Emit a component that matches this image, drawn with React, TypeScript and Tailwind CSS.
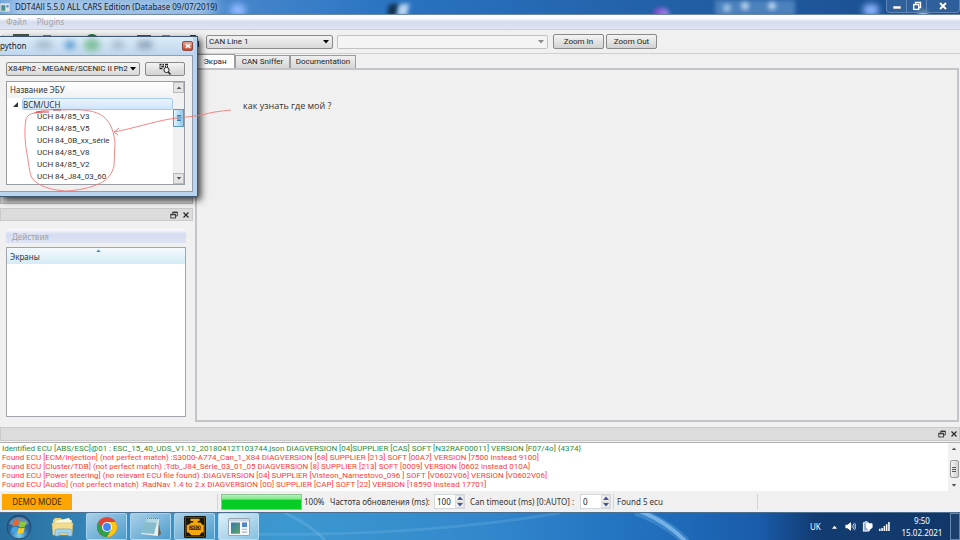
import React, { useState } from 'react';
import clsx from 'clsx';

const ecuList = [
  'UCH 84/85_V3',
  'UCH 84/85_V5',
  'UCH 84_0B_xx_série',
  'UCH 84/85_V8',
  'UCH 84/85_V2',
  'UCH 84_J84_03_60',
];

const logLines = [
  { ok: true, text: 'Identified ECU [ABS/ESC]@01 : ESC_15_40_UDS_V1.12_20180412T103744.json DIAGVERSION [04]SUPPLIER [CAS] SOFT [N32RAF00011] VERSION [F07/4o] {4374}' },
  { ok: false, text: 'Found ECU [ECM/Injection] (not perfect match) :S3000-A774_Can_1_X84 DIAGVERSION [68] SUPPLIER [213] SOFT [00A7] VERSION [7500 instead 9100]' },
  { ok: false, text: 'Found ECU [Cluster/TDB] (not perfect match) :Tdb_J84_Série_03_01_05 DIAGVERSION [8] SUPPLIER [213] SOFT [0009] VERSION [0602 instead 010A]' },
  { ok: false, text: 'Found ECU [Power steering] (no relevant ECU file found) :DIAGVERSION [04] SUPPLIER [Visteon_Namestovo_096 ] SOFT [V0602V06] VERSION [V0602V06]' },
  { ok: false, text: 'Found ECU [Audio] (not perfect match) :RadNav 1.4 to 2.x DIAGVERSION [0D] SUPPLIER [CAP] SOFT [22] VERSION [18590 instead 17701]' },
];

const tabs = ['Экран', 'CAN Sniffer', 'Documentation'];

const controlFont = "font-['Roboto','Noto_Sans',sans-serif]";

function Arrow({ up, className }: { up?: boolean; className?: string }) {
  return (
    <svg viewBox="0 0 6 4" className={clsx('h-1 w-1.5', className)} fill="currentColor" aria-hidden="true">
      <path d={up ? 'M0 4 3 0.5 6 4z' : 'M0 0 3 3.5 6 0z'} />
    </svg>
  );
}

function WindowControls() {
  return (
    <div className="flex h-[13px] shrink-0 self-start rounded-b border border-t-0 border-[#5f86b4] bg-[#3c6ca4]/60">
      <button aria-label="Minimize" className="flex w-5 items-center justify-center border-r border-[#5f86b4]">
        <svg viewBox="0 0 10 10" className="size-2.5" aria-hidden="true">
          <rect x="1" y="5" width="8" height="3" fill="#fff" stroke="#555f70" strokeWidth=".6" />
        </svg>
      </button>
      <button aria-label="Restore" className="flex w-5 items-center justify-center border-r border-[#5f86b4]">
        <svg viewBox="0 0 10 10" className="size-2.5" fill="none" stroke="#fff" strokeWidth="1.4" aria-hidden="true">
          <path d="M3.5 3V1.5h5v5H7" />
          <rect x="1.7" y="3.6" width="5" height="4.8" />
        </svg>
      </button>
      <button aria-label="Close" className="flex w-8 items-center justify-center">
        <svg viewBox="0 0 10 10" className="size-2.5" fill="none" aria-hidden="true">
          <path d="M2 2l6 6M8 2L2 8" stroke="#4a5568" strokeWidth="3" />
          <path d="M2 2l6 6M8 2L2 8" stroke="#fff" strokeWidth="1.9" />
        </svg>
      </button>
    </div>
  );
}

function TitleBar() {
  return (
    <header className="relative flex h-[15px] shrink-0 items-center overflow-hidden border-b border-[#6d87a8] bg-linear-to-r from-[#6ea3da] via-[#2a74c2] via-40% to-[#1a4c8c]">
      <div className="absolute inset-0" aria-hidden="true">
        <div className="absolute -top-1 left-2 h-6 w-52 rounded-full bg-white/50 blur-sm" />
        <div className="absolute top-1 left-[230px] h-3 w-4 rounded-full bg-[#8fb8ff] blur-[3px]" />
        <div className="absolute top-1 left-[388px] h-3 w-2.5 -skew-x-12 bg-[#12304f] blur-[2px]" />
        <div className="absolute top-1 left-[398px] h-3 w-2.5 -skew-x-12 bg-[#b8d4ee] blur-[2px]" />
        <div className="absolute top-2 left-[653px] h-3 w-4 rounded-full bg-linear-to-r from-[#7c3fc0] to-[#a88cf4] blur-[2px]" />
        <div className="absolute top-0 left-[715px] h-4 w-20 bg-[#4d82bd] blur-[2px]" />
        <div className="absolute top-1 left-[723px] size-2 rounded-full bg-[#9cc0e4] blur-[2px]" />
        <div className="absolute top-0.5 left-[741px] size-2 rounded-full bg-[#b4d0ec] blur-[2px]" />
        <div className="absolute top-0.5 left-[768px] size-2 rounded-full bg-[#b4d0ec] blur-[2px]" />
        <div className="absolute top-1 left-[863px] h-3 w-4 rounded-full bg-[#8ab4ff] blur-[3px]" />
        <div className="absolute top-2.5 left-[918px] h-2 w-2.5 rounded-full bg-[#c8d478] blur-[2px]" />
      </div>
      <div className="relative flex h-full min-w-0 grow items-center gap-[5px]">
        <AppIcon className="h-[9px] w-2.5" />
        <h1 className="truncate text-[8px] leading-3 text-[#17202c]">
          DDT4All 5.5.0 ALL CARS Edition (Database 09/07/2019)
        </h1>
      </div>
      <div className="relative flex h-full">
        <WindowControls />
      </div>
    </header>
  );
}

function AppIcon({ className }: { className?: string }) {
  return (
    <svg viewBox="0 0 22 16" className={className} preserveAspectRatio="none" aria-hidden="true">
      <rect x=".5" y=".5" width="21" height="15" rx="1" fill="#f4f6f8" stroke="#98a6b4" />
      <rect x="1" y="1" width="20" height="2" fill="#cfd8e2" />
      <rect x="3" y="4" width="9" height="10" fill="url(#appScreen)" />
      <rect x="14" y="4" width="5" height="4" fill="#4f86c6" />
      <path d="M14 10h5M14 12.500h5" stroke="#aab4c0" />
      <defs>
        <linearGradient id="appScreen" x1="0" y1="0" x2="1" y2="1">
          <stop offset="0" stopColor="#3c78b4" />
          <stop offset="1" stopColor="#58a860" />
        </linearGradient>
      </defs>
    </svg>
  );
}

function Toolbar() {
  return (
    <div className={clsx('flex h-6 shrink-0 items-center border-b border-[#cfcfcf] bg-[#f0f0f0]', controlFont)}>
      <svg viewBox="0 0 206 24" className="h-6 w-[206px] shrink-0" aria-hidden="true">
        <path d="M3 5v14" stroke="#999" />
        <rect x="13" y="4" width="16" height="14" fill="#4c5a50" />
        <path d="M43 5h8v12h-8z" fill="#777" />
        <circle cx="70" cy="13" r="6" fill="#3c84c4" />
        <circle cx="92" cy="11" r="7" fill="#1f7a34" />
        <path d="M112 6h12l-6 12z" fill="#888" />
        <rect x="137" y="5" width="14" height="13" fill="#555" />
        <path d="M162 5h8v12h-8z" fill="#888" />
        <path d="M190 5h6v6h3v6h-9z" fill="#233a70" />
      </svg>
      <div className="relative mr-1 w-[127px]">
        <select
          aria-label="CAN line"
          className="block h-3.5 w-full appearance-none rounded-xs border border-[#8a8a8a] bg-linear-to-b from-[#f3f3f3] to-[#d9d9d9] px-0.5 text-[8px] leading-3 text-[#222]"
        >
          <option>CAN Line 1</option>
        </select>
        <Arrow className="pointer-events-none absolute top-[5px] right-1 text-black" />
      </div>
      <div className="relative mr-[5px] w-[211px]">
        <select
          aria-label="Command"
          disabled
          className="block h-3.5 w-full appearance-none rounded-xs border border-[#c3c3c3] bg-[#f4f4f4] px-0.5 text-[8px] leading-3 opacity-100"
        />
        <Arrow className="pointer-events-none absolute top-[5px] right-1 text-[#8c8c8c]" />
      </div>
      <div className="flex gap-0.5">
        {['Zoom In', 'Zoom Out'].map((label) => (
          <button
            key={label}
            className="h-[15px] w-[51px] rounded-xs border border-[#8a8a8a] bg-linear-to-b from-[#f4f4f4] to-[#d2d2d2] text-[8px] leading-3 text-[#222]"
          >
            {label}
          </button>
        ))}
      </div>
    </div>
  );
}

function DockButtons() {
  return (
    <div className="flex items-center gap-1">
      <button aria-label="Float">
        <svg viewBox="0 0 8 8" className="size-2" fill="none" stroke="#222" strokeWidth=".8" aria-hidden="true">
          <path d="M2.800 3V1h4.500v4H5.500M2.800 1.500h4.500" />
          <rect x=".8" y="3.200" width="4.600" height="3.800" />
          <path d="M.8 3.800h4.600" />
        </svg>
      </button>
      <button aria-label="Close dock">
        <svg viewBox="0 0 8 8" className="size-2" fill="none" stroke="#222" strokeWidth="1.100" aria-hidden="true">
          <path d="M1.500 1.500l5 5M6.500 1.500l-5 5" />
        </svg>
      </button>
    </div>
  );
}

function ScreensDock() {
  return (
    <aside className="flex w-[193px] shrink-0 flex-col pt-[142px]">
      <div className="mb-1 h-2 border border-[#b4b4b4] bg-[#cfcfcf]" />
      <div className="flex h-[13px] items-center justify-end border border-[#cacaca] bg-[#dcdcdc] pr-0.5">
        <DockButtons />
      </div>
      <div className="flex grow flex-col pt-2 pr-[7px] pb-2.5 pl-1.5">
        <div className="mb-1 h-3.5 bg-linear-to-b from-[#fbfcfe] via-[#d6dcf0] via-40% to-[#dfe4f4] pl-1.5 text-[8px] leading-4 text-[#a2a2a2]">
          Действия
        </div>
        <section className="grow border border-[#a2a6ac] bg-white">
          <h2 className="relative h-4 bg-linear-to-b from-[#f4fafd] to-[#d4ebf6] pl-[3px] text-[8px] leading-[18px] text-[#333]">
            Экраны
            <Arrow up className="absolute top-px left-1/2 h-[3px] w-[5px] text-[#4f8fae]" />
          </h2>
        </section>
      </div>
    </aside>
  );
}

function TabArea() {
  const [active, setActive] = useState(tabs[0]);
  return (
    <main className="flex min-w-0 grow flex-col pr-px pb-[5px] pl-0.5">
      <div role="tablist" className={clsx('flex h-3.5 items-end', controlFont)}>
        {tabs.map((tab) => (
          <button
            key={tab}
            role="tab"
            aria-selected={active === tab}
            onClick={() => setActive(tab)}
            className={clsx(
              'border border-b-0 border-[#9c9c9c] text-center text-[8px] leading-3 text-[#222]',
              tab === 'Экран' && 'w-10',
              tab === 'CAN Sniffer' && 'w-[55px]',
              tab === 'Documentation' && 'w-[66px]',
              active === tab ? 'h-3.5 bg-white' : 'h-[13px] bg-linear-to-b from-[#f0f0f0] to-[#d6d6d6]',
            )}
          >
            {tab}
          </button>
        ))}
      </div>
      <div role="tabpanel" className="grow border-2 border-[#c4c4c8] bg-[#f0f0f0] pt-7 pl-[46px]">
        <p className="font-['Open_Sans','Noto_Sans',sans-serif] text-[9px] leading-4 text-[#333]">как узнать где мой ?</p>
      </div>
    </main>
  );
}

function PythonDialog() {
  return (
    <div
      role="dialog"
      aria-label="python"
      className="absolute top-9 left-0 flex h-[161px] w-[198px] flex-col border border-l-0 border-[#3f5870] bg-[#b9d4ee] pr-1 pb-1 shadow-[3px_3px_7px_rgba(0,0,0,0.75)]"
    >
      <div className="relative flex h-[18px] shrink-0 items-center justify-between overflow-hidden bg-linear-to-b from-[#dcebf8] to-[#bed7ee]">
        <div className="absolute inset-0" aria-hidden="true">
          <div className="absolute top-1 left-9 h-2 w-4 rounded-full bg-[#a4bacd] blur-[3px]" />
          <div className="absolute top-1 left-[65px] h-2 w-2.5 rounded-full bg-[#4e94cf] blur-[3px]" />
          <div className="absolute top-0.5 left-[84px] h-3 w-4 rounded-full bg-[#7fc09a] blur-[3px]" />
          <div className="absolute top-1 left-[112px] h-2 w-3 rounded-full bg-[#a4bacd] blur-[3px]" />
          <div className="absolute top-1 left-[137px] h-2 w-4 rounded-full bg-[#8ea4b8] blur-[3px]" />
        </div>
        <h2 className="relative text-[8px] leading-3 text-[#1c1c1c]">python</h2>
        <button
          aria-label="Close dialog"
          className="relative flex h-2.5 w-[11px] items-center justify-center rounded-xs border border-[#8c4a40] bg-linear-to-b from-[#e8a090] to-[#c8442c]"
        >
          <svg viewBox="0 0 8 8" className="size-1.5" stroke="#fff" strokeWidth="2" aria-hidden="true">
            <path d="M1 1.500l6 5M7 1.500l-6 5" />
          </svg>
        </button>
      </div>
      <div className="flex grow flex-col border border-l-0 border-[#8fa0b2] bg-[#f0f0f0] pt-1.5 pr-[7px] pb-1.5 pl-1.5">
        <div className="mb-[5px] flex gap-[5px]">
          <div className={clsx('relative w-[134px]', controlFont)}>
            <select
              aria-label="Vehicle"
              className="block h-3.5 w-full appearance-none rounded-xs border border-[#8a8a8a] bg-linear-to-b from-[#f3f3f3] to-[#d9d9d9] px-px text-[8px] leading-3 text-[#222]"
            >
              <option>X84Ph2 - MEGANE/SCENIC II Ph2</option>
            </select>
            <Arrow className="pointer-events-none absolute top-[5px] right-1 text-black" />
          </div>
          <button
            aria-label="Scan"
            className="flex h-3.5 grow items-center justify-center rounded-xs border border-[#8a8a8a] bg-linear-to-b from-[#f4f4f4] to-[#d2d2d2]"
          >
            <svg viewBox="0 0 12 12" className="size-3" fill="none" stroke="#222" aria-hidden="true">
              <path d="M0.500 1.500h2M3.500 1.500h1.500M6 1.500h3M0.500 3.500h1M2.500 3.500h2.500M6 3.500h1M8 3.500h1M0.500 5.500h3" strokeWidth="1.500" />
              <circle cx="7.500" cy="7" r="2.600" fill="#f4f4f4" />
              <path d="M9.300 9l2.200 2.500" strokeWidth="1.400" />
            </svg>
          </button>
        </div>
        <div className="flex grow border border-[#9a9ea4] bg-white text-[8px] text-[#333]">
          <div className="min-w-0 grow">
            <h3 className="h-4 bg-linear-to-b from-white to-[#f0f1f3] pl-[3px] leading-4">Название ЭБУ</h3>
            <div className="flex h-3 items-center">
              <svg viewBox="0 0 6 6" className="mr-1 ml-1.5 size-[5px]" fill="#333" aria-hidden="true">
                <path d="M6 0v6H0z" />
              </svg>
              <span className="h-3 grow rounded-xs border border-[#a8cdf0] bg-linear-to-b from-[#eaf4fd] to-[#cfe5fa] leading-[11px]">
                BCM/UCH
              </span>
            </div>
            <ul className={clsx('pt-px pl-[30px] leading-3', controlFont)}>
              {ecuList.map((ecu) => (
                <li key={ecu}>{ecu}</li>
              ))}
            </ul>
          </div>
          <div className="flex w-[11px] flex-col bg-[#f1f1f1]">
            <button aria-label="Scroll up" className="flex h-[11px] items-center justify-center border border-[#bbb] bg-[#e4e4e4] text-[#555]">
              <Arrow up className="h-[3px] w-1" />
            </button>
            <div className="mt-4 flex h-[18px] items-center justify-center border border-[#5a9bc4] bg-linear-to-r from-[#dff2fc] to-[#8fc8ec]">
              <span className="h-1.5 w-1 border-y border-[#3a7ca8] bg-[#6fb0d8]" />
            </div>
            <button aria-label="Scroll down" className="mt-auto flex h-[11px] items-center justify-center border border-[#bbb] bg-[#e4e4e4] text-[#555]">
              <Arrow className="h-[3px] w-1" />
            </button>
          </div>
        </div>
      </div>
    </div>
  );
}

// hand drawn marker around the UCH entries
function Markup() {
  return (
    <svg viewBox="0 0 240 200" className="pointer-events-none absolute top-0 left-0 h-[200px] w-60" fill="none" stroke="#f07878" strokeWidth=".9" aria-hidden="true">
      <path d="M34 113C42 110 54 109 64 110C80 109 96 110 104 117C112 124 114 134 115 143L114 166C112 174 108 178 104 181C96 186 84 190 66 191C50 190 38 186 32 178C29 172 29 164 27 154C25 143 24 130 26 119C28 114 33 112 42 113" />
      <path d="M231 110C222 111 212 112 206 114C195 117 180 117 170 119C152 122 135 128 114 132M119 128L114 132L118 135" />
      <path d="M36 112h13M53 110h8" stroke="#c81e28" />
    </svg>
  );
}

function LogPane() {
  return (
    <section className="shrink-0">
      <div className="mb-px flex h-3.5 items-center justify-end border border-[#cacaca] bg-[#dcdcdc] pr-px">
        <DockButtons />
      </div>
      <div className="flex h-[49px] border-t border-[#b0b0b0] bg-white">
        <div className={clsx('min-w-0 grow overflow-hidden pt-px pl-0.5 text-[8px] leading-[9px] whitespace-nowrap', controlFont)}>
          {logLines.map((line) => (
            <p key={line.text} className={line.ok ? 'text-[#2e8b3a]' : 'text-[#ff3c34]'}>
              {line.text}
            </p>
          ))}
        </div>
        <div className="flex w-3 flex-col items-center bg-[#f1f1f1] py-1 text-[#555]">
          <Arrow up className="h-[3px] w-1" />
          <div className="mt-2.5 flex h-[18px] w-[9px] flex-col items-center justify-center gap-px rounded-xs border border-[#999] bg-linear-to-r from-[#f4f4f4] to-[#d0d0d0]">
            <span className="h-px w-1 bg-[#555]" />
            <span className="h-px w-1 bg-[#555]" />
            <span className="h-px w-1 bg-[#555]" />
          </div>
          <Arrow className="mt-auto h-[3px] w-1" />
        </div>
      </div>
    </section>
  );
}

function SpinBox({ id, value }: { id: string; value: string }) {
  return (
    <div className="flex h-[15px] w-[31px] border border-[#d4d8dc] bg-white">
      <input id={id} defaultValue={value} className="w-5 min-w-0 px-0.5 text-[8px] leading-3 text-[#222] outline-none" />
      <div className="flex w-[9px] flex-col text-[#46569a]">
        <button aria-label="Increase" className="flex grow items-center justify-center border border-[#ddd] bg-[#f0f0f0]">
          <Arrow up className="h-0.5 w-1" />
        </button>
        <button aria-label="Decrease" className="flex grow items-center justify-center border border-[#ddd] bg-[#f0f0f0]">
          <Arrow className="h-0.5 w-1" />
        </button>
      </div>
    </div>
  );
}

function StatusBar() {
  return (
    <footer className="flex h-[21px] shrink-0 items-center bg-[#f0f0f0] pl-0.5 text-[8px] leading-3 text-[#333]">
      <button className="h-4 w-[70px] bg-[#ffa500] leading-3 text-[#3c2c00]">DEMO MODE</button>
      <div className="ml-[145px] flex items-center border-l border-[#d4d4d4] pl-[3px]">
        <div
          role="progressbar"
          aria-label="Scan progress"
          aria-valuenow={100}
          className="h-4 w-[81px] border border-[#8cc494] bg-linear-to-b from-[#b4f4bc] via-[#7ce888] via-30% to-[#06cc24] to-35%"
        />
        <span className="w-[27px] pl-0.5">100%</span>
      </div>
      <label htmlFor="refresh" className="w-[105px] pl-px whitespace-nowrap">Частота обновления (ms):</label>
      <SpinBox id="refresh" value="100" />
      <label htmlFor="timeout" className="w-[115px] pl-[5px] whitespace-nowrap">Can timeout (ms) [0:AUTO] :</label>
      <SpinBox id="timeout" value="0" />
      <span className="ml-0.5 flex h-4 w-[145px] items-center border-x border-[#d4d4d4] pl-[3px]">Found 5 ecu</span>
    </footer>
  );
}

function ExplorerIcon() {
  return (
    <svg viewBox="0 0 24 22" className="h-[22px] w-6" aria-hidden="true">
      <path d="M2 4l2-2h6l1 2h10v14H2z" fill="#e8cf7c" />
      <path d="M4 5l14-3 2 3v12H4z" fill="#fbf6d8" />
      <path d="M1 7h21l-1 12H2z" fill="#f3dd8c" stroke="#d3b45a" strokeWidth=".5" />
      <path d="M4 20v-5q0-2 2-2h13q2 0 2 2v5h-4v-3H8v3z" fill="#a6d4ee" stroke="#5b9dc6" strokeWidth=".6" />
    </svg>
  );
}

function ChromeIcon() {
  return (
    <svg viewBox="0 0 24 24" className="size-[22px]" aria-hidden="true">
      <circle cx="12" cy="12" r="11" fill="#e04436" />
      <path d="M2.500 6.500A11 11 0 0 0 12 23l4.800-8.200H7.200z" fill="#2ba24c" />
      <path d="M21.500 6.500A11 11 0 0 1 12 23l4.800-8.200L12 6.500z" fill="#fbc618" />
      <circle cx="12" cy="12" r="5.500" fill="#fff" />
      <circle cx="12" cy="12" r="4.300" fill="#4285f4" />
    </svg>
  );
}

function NotepadIcon() {
  return (
    <svg viewBox="0 0 24 22" className="h-[22px] w-6" aria-hidden="true">
      <path d="M19 3l3 15-3 2z" fill="#6c6250" />
      <path d="M8 2l12 1-1 17-17-2z" fill="#e8f0f2" />
      <path d="M8 2l11 1-4 15-13-1z" fill="#86bccb" />
      <path d="M8 2l11 1-1 4-11-1z" fill="#b4d8e2" />
      <path d="M8 2.500h11" stroke="#6b7f88" strokeDasharray="1 1" />
    </svg>
  );
}

function EngineIcon() {
  return (
    <svg viewBox="0 0 24 24" className="size-[22px]" aria-hidden="true">
      <rect width="24" height="24" rx="1.500" fill="#1a1710" />
      <rect x="1.500" y="1.500" width="21" height="21" fill="none" stroke="#8c6414" strokeWidth=".6" />
      <path d="M7 3h10v2.500h-2V7h3l2 2.500h1.500V18H19l-2 3H8l-3-3H3V9.500h2L8 7h2V5.500H7z" fill="#f5a70c" />
      <rect x="5.500" y="10.500" width="13" height="4.500" rx="1" fill="#1a1710" />
      <text x="12" y="14.500" textAnchor="middle" fontSize="4" fontWeight="700" fill="#f5a70c">CHECK</text>
    </svg>
  );
}

function StartOrb() {
  return (
    <svg viewBox="0 0 26 26" className="size-[26px]" aria-hidden="true">
      <defs>
        <radialGradient id="orb" cx=".5" cy=".85" r=".8">
          <stop offset="0" stopColor="#7fd4f4" />
          <stop offset=".5" stopColor="#2a6ea6" />
          <stop offset="1" stopColor="#24507c" />
        </radialGradient>
      </defs>
      <circle cx="13" cy="13" r="12" fill="url(#orb)" stroke="#2a4a68" />
      <path d="M3 10a10.500 10 0 0 1 20 0q-10 4-20 0z" fill="#fff" opacity=".3" />
      <path d="M7.500 7q3-1.600 5.500-.3l-1.200 5.500q-2.500-1.200-5.500.2z" fill="#ee6428" />
      <path d="M14 7.200q3 1.300 6.500-.3l-1.400 5.500q-3 1.500-6.200.3z" fill="#8cc63c" />
      <path d="M6 13.500q3-1.400 5.500-.2l-1.300 5.500q-2.500-1.200-5.500.2z" fill="#3fa4e8" />
      <path d="M12.600 13.800q2.800 1.200 6.200-.2l-1.400 5.500q-3 1.400-6.200.2z" fill="#fcc81c" />
    </svg>
  );
}

const taskButtons = [
  { name: 'Chrome', icon: <ChromeIcon />, active: false },
  { name: 'Notepad', icon: <NotepadIcon />, active: false },
  { name: 'Check engine', icon: <EngineIcon />, active: false },
  { name: 'DDT4All', icon: <AppIcon className="h-[18px] w-[22px]" />, active: true },
];

function Taskbar() {
  return (
    <nav className="relative flex h-7 shrink-0 items-stretch overflow-hidden border-t border-[#4d6f90] bg-[linear-gradient(90deg,#266c9c_0%,#3a8cc0_12%,#3c98d0_30%,#3388cc_50%,#2272c0_66%,#1a5cac_79%,#123c72_85%,#123768_100%)] text-white">
      <svg viewBox="0 0 960 28" preserveAspectRatio="none" className="absolute inset-0 size-full" fill="none" aria-hidden="true">
        <path d="M258 22Q420 24 560 0" stroke="#8ccdf0" strokeWidth="3" opacity=".2" />
        <path d="M285 0Q310 12 325 28" stroke="#8ccdf0" strokeWidth="3" opacity=".25" />
        <path d="M636 -2Q668 10 686 30" stroke="#6aaee6" strokeWidth="9" opacity=".35" />
        <path d="M640 -2Q668 10 686 30" stroke="#9cd0f8" strokeWidth="4" opacity=".6" />
      </svg>
      <div className="relative flex w-full">
        <button aria-label="Start" className="flex w-[38px] items-center justify-center">
          <StartOrb />
        </button>
        <button aria-label="Explorer" className="mr-1 flex w-11 items-center justify-center pl-1.5">
          <ExplorerIcon />
        </button>
        <div className="flex gap-[3px]">
          {taskButtons.map((task) => (
            <button
              key={task.name}
              aria-label={task.name}
              className={clsx(
                'flex w-[41px] items-center justify-center rounded-xs border border-[#b8dcf0]/80',
                task.active ? 'bg-linear-to-br from-[#dff0f8] to-[#86c0e0]' : 'bg-linear-to-br from-[#a8d0e8] to-[#4c9ccc]',
              )}
            >
              {task.icon}
            </button>
          ))}
        </div>
        <div className="ml-auto flex items-center">
          <span className="w-[22px] text-[8px] leading-3">UK</span>
          <Arrow up className="mr-2 w-[5px]" />
          <svg viewBox="0 0 12 12" className="mr-1.5 size-[11px]" fill="none" stroke="#fff" aria-hidden="true">
            <path d="M1 4.500h2L6 2v8L3 7.500H1z" fill="#fff" />
            <path d="M7.500 4.500q1 1.500 0 3M9 3q2 3 0 6M10.500 2q2.500 4 0 8" strokeWidth=".8" />
          </svg>
          <svg viewBox="0 0 12 12" className="mr-1.5 size-[11px]" fill="none" stroke="#fff" aria-hidden="true">
            <rect x="1.500" y="2" width="5.500" height="9" fill="#9fb4cc" />
            <path d="M3 .8h3M5 3h6v4L9 9H7L5 7z" fill="#fff" />
            <path d="M8 9v2" />
          </svg>
          <svg viewBox="0 0 12 12" className="mr-2 size-[11px]" fill="#fff" aria-hidden="true">
            <path d="M0 8.500h1.700V11H0zM2.500 7.500h1.700V11H2.500zM5 5.500h1.700V11H5zM7.500 3.500h1.700V11H7.500zM10 1h1.700v10H10z" />
          </svg>
          <time dateTime="2021-02-15T09:50" className="w-12 text-center text-[8px] leading-3">
            <span className="block">9:50</span>
            <span className="block">15.02.2021</span>
          </time>
          <button aria-label="Show desktop" className="ml-1 w-2.5 self-stretch border border-[#5f87b0] bg-[#1c3f6c]" />
        </div>
      </div>
    </nav>
  );
}

export default function App() {
  return (
    <div className="relative flex min-h-screen flex-col overflow-hidden bg-[#f0f0f0] font-['Noto_Sans','Open_Sans',sans-serif]">
      <TitleBar />
      <div className="flex h-[15px] shrink-0 gap-2.5 border-b border-[#c4d0e6] bg-linear-to-b from-white from-20% via-[#d5dcee] via-50% to-[#dfe5f4] pl-1.5 text-[8px] leading-[14px] text-[#a2a2a2]">
        <button>Файл</button>
        <button>Plugins</button>
      </div>
      <Toolbar />
      <div className="flex grow">
        <ScreensDock />
        <TabArea />
      </div>
      <LogPane />
      <StatusBar />
      <Taskbar />
      <PythonDialog />
      <Markup />
    </div>
  );
}
